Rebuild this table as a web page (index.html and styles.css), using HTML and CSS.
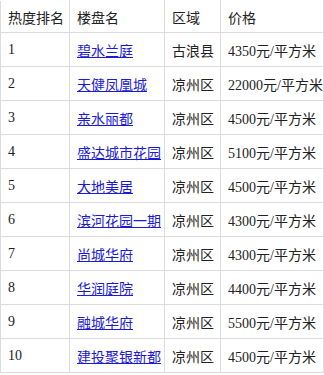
FILE: index.html
```html
<!DOCTYPE html>
<html lang="zh">
<head>
<meta charset="utf-8">
<link rel="stylesheet" href="styles.css">
</head>
<body>
<table class="rank">
  <colgroup>
    <col class="c1"><col class="c2"><col class="c3"><col class="c4">
  </colgroup>
  <thead>
    <tr><th>热度排名</th><th>楼盘名</th><th>区域</th><th>价格</th></tr>
  </thead>
  <tbody>
    <tr><td>1</td><td><a href="#">碧水兰庭</a></td><td>古浪县</td><td>4350元/平方米</td></tr>
    <tr><td>2</td><td><a href="#">天健凤凰城</a></td><td>凉州区</td><td>22000元/平方米</td></tr>
    <tr><td>3</td><td><a href="#">亲水丽都</a></td><td>凉州区</td><td>4500元/平方米</td></tr>
    <tr><td>4</td><td><a href="#">盛达城市花园</a></td><td>凉州区</td><td>5100元/平方米</td></tr>
    <tr><td>5</td><td><a href="#">大地美居</a></td><td>凉州区</td><td>4500元/平方米</td></tr>
    <tr><td>6</td><td><a href="#">滨河花园一期</a></td><td>凉州区</td><td>4300元/平方米</td></tr>
    <tr><td>7</td><td><a href="#">尚城华府</a></td><td>凉州区</td><td>4300元/平方米</td></tr>
    <tr><td>8</td><td><a href="#">华润庭院</a></td><td>凉州区</td><td>4400元/平方米</td></tr>
    <tr><td>9</td><td><a href="#">融城华府</a></td><td>凉州区</td><td>5500元/平方米</td></tr>
    <tr><td>10</td><td><a href="#">建投聚银新都</a></td><td>凉州区</td><td>4500元/平方米</td></tr>
  </tbody>
</table>
</body>
</html>
```
FILE: styles.css
```css
html, body {
  margin: 0;
  padding: 0;
  background: #fff;
}
.rank {
  border-collapse: collapse;
  table-layout: fixed;
  width: 323px;
  font-family: "Liberation Serif", "Noto Sans CJK SC", serif;
  font-size: 14px;
  color: #222;
}
.c1 { width: 69px; }
.c2 { width: 95px; }
.c3 { width: 56px; }
.c4 { width: 103px; }
.rank th,
.rank td {
  border: 1px solid #dcdcdc;
  padding: 0 0 0 7px;
  height: 33px;
  text-align: left;
  font-weight: normal;
  white-space: nowrap;
  overflow: hidden;
}
.rank th {
  height: 31px;
  border-top-color: #fff;
}
.rank a {
  color: #1a1ad8;
  text-decoration: underline;
}
```
